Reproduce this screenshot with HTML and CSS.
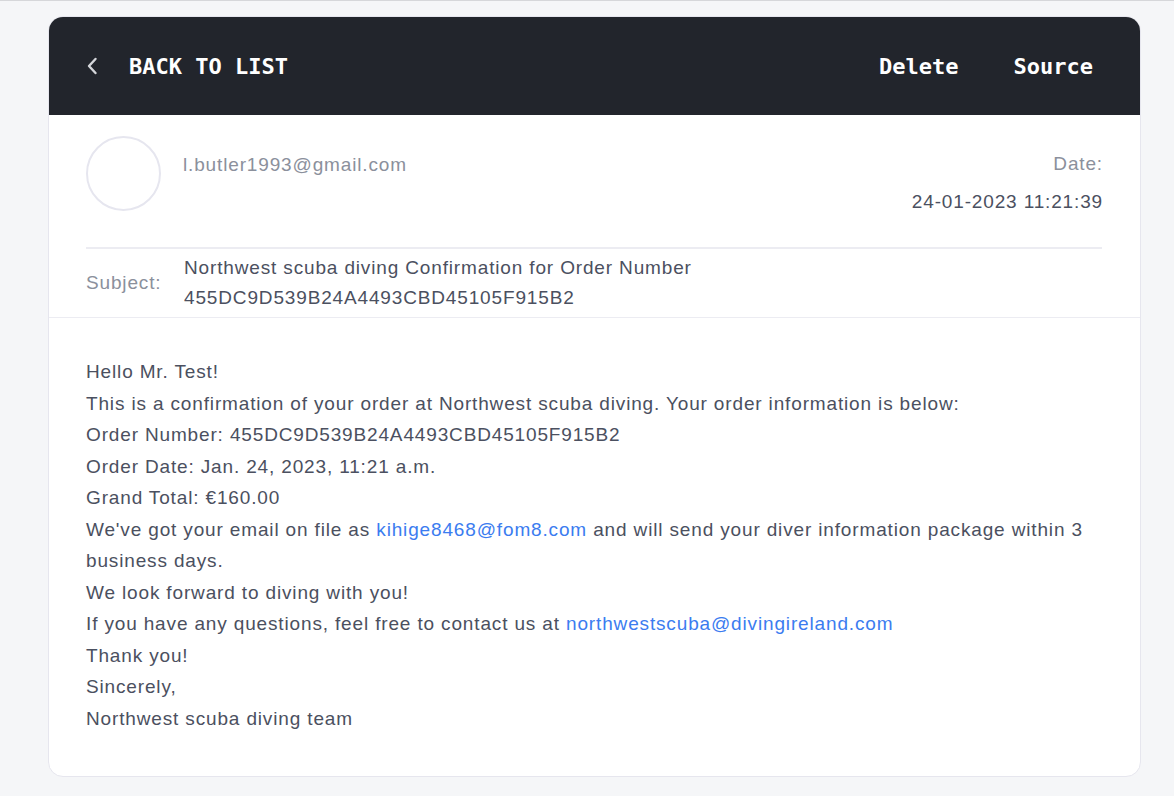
FILE: index.html
```html
<!DOCTYPE html>
<html>
<head>
<meta charset="utf-8">
<link rel="stylesheet" href="styles.css">
</head>
<body>
<div class="page">
  <div class="card">
    <div class="topbar">
      <a class="back">
        <svg class="chev" width="12" height="18" viewBox="0 0 12 18"><path d="M9.5 2 L3 9 L9.5 16" fill="none" stroke="#d4d6da" stroke-width="2.4" stroke-linecap="round" stroke-linejoin="round"/></svg>
        <span>BACK TO LIST</span>
      </a>
      <div class="actions">
        <a class="act">Delete</a>
        <a class="act">Source</a>
      </div>
    </div>
    <div class="meta">
      <div class="from">
        <div class="avatar"></div>
        <div class="sender">l.butler1993@gmail.com</div>
        <div class="date">
          <div class="date-label">Date:</div>
          <div class="date-value">24-01-2023 11:21:39</div>
        </div>
      </div>
      <div class="subject">
        <div class="subject-label">Subject:</div>
        <div class="subject-text">Northwest scuba diving Confirmation for Order Number<br>455DC9D539B24A4493CBD45105F915B2</div>
      </div>
    </div>
    <div class="body">
      <p>Hello Mr. Test!</p>
      <p>This is a confirmation of your order at Northwest scuba diving. Your order information is below:</p>
      <p>Order Number: 455DC9D539B24A4493CBD45105F915B2</p>
      <p>Order Date: Jan. 24, 2023, 11:21 a.m.</p>
      <p>Grand Total: €160.00</p>
      <p>We've got your email on file as <a class="link">kihige8468@fom8.com</a> and will send your diver information package within 3 business days.</p>
      <p>We look forward to diving with you!</p>
      <p>If you have any questions, feel free to contact us at <a class="link">northwestscuba@divingireland.com</a></p>
      <p>Thank you!</p>
      <p>Sincerely,</p>
      <p>Northwest scuba diving team</p>
    </div>
  </div>
</div>
</body>
</html>
```

FILE: styles.css
```css
html, body {
  margin: 0;
  padding: 0;
}
body {
  background: #f5f6f8;
  border-top: 1px solid #d6d7da;
  font-family: "Liberation Sans", Arial, sans-serif;
  height: 795px;
  overflow: hidden;
}
.page {
  padding: 15px 33px 0 48px;
}
.card {
  background: #fff;
  border: 1px solid #e6e6ee;
  border-radius: 15px;
  overflow: hidden;
  width: 1091px;
}
.topbar {
  background: #22252c;
  height: 98px;
  display: flex;
  align-items: center;
  justify-content: space-between;
  padding: 0 47px 0 37px;
  font-family: "DejaVu Sans Mono", monospace;
  font-weight: bold;
  font-size: 22px;
  color: #fff;
}
.back {
  display: flex;
  align-items: center;
  gap: 31px;
}
.chev {
  display: block;
}
.actions {
  display: flex;
  gap: 55px;
}
.meta {
  padding: 21px 38px 0 37px;
  border-bottom: 1px solid #ececf2;
  font-size: 19px;
  letter-spacing: 0.85px;
}
.from {
  display: flex;
  align-items: flex-start;
  padding-bottom: 34px;
  border-bottom: 2px solid #ececf2;
}
.avatar {
  width: 71px;
  height: 71px;
  border: 2px solid #e6e6ef;
  border-radius: 50%;
  flex: none;
}
.sender {
  margin-left: 22px;
  margin-top: 18px;
  color: #8b909c;
  line-height: 22px;
  flex: 1;
}
.date {
  text-align: right;
  margin-top: 17px;
  margin-right: -1px;
}
.date-label {
  color: #8b909c;
  line-height: 22px;
}
.date-value {
  color: #4b5060;
  margin-top: 16px;
  line-height: 22px;
}
.subject {
  display: flex;
  align-items: center;
  padding: 4px 0 4px;
}
.subject-label {
  width: 98px;
  color: #8b909c;
}
.subject-text {
  color: #4b5060;
  line-height: 30px;
}
.body {
  padding: 38px 38px 42px 37px;
  font-size: 19px;
  letter-spacing: 0.85px;
  line-height: 31.5px;
  color: #4b5060;
}
.body p {
  margin: 0;
}
.link {
  color: #3b7cf0;
}
```
